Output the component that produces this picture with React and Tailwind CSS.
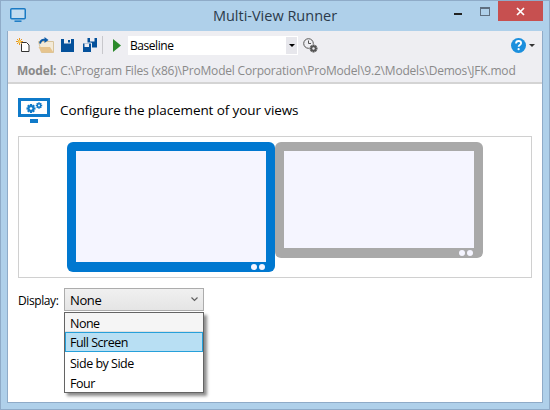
import React from 'react';

const font = { fontFamily: '"Open Sans", "Noto Sans", sans-serif' };

const Gear = ({ x, y, r, fill = '#fff', hole = '#fff' }) => (
  <g>
    {[0, 45, 90, 135].map((a) => (
      <rect key={a} x={x - r * 0.25} y={y - r} width={r * 0.5} height={r * 2} fill={fill} transform={`rotate(${a} ${x} ${y})`} />
    ))}
    <circle cx={x} cy={y} r={r * 0.72} fill={fill} />
    <circle cx={x} cy={y} r={r * 0.3} fill={hole} />
  </g>
);

const NewIcon = () => (
  <svg width="14" height="14" viewBox="0 0 14 14" className="shrink-0">
    <path d="M5.500 4.500H10.500L13 7v6.500H5.500z" fill="#fff" stroke="#333" strokeWidth="1" />
    <g stroke="#e8961e" strokeWidth="1">
      <path d="M3.500 0v7M0 3.500h7M1 1l5 5M6 1L1 6" />
    </g>
    <circle cx="3.500" cy="3.500" r="1.500" fill="#f6d365" />
  </svg>
);

const OpenIcon = () => (
  <svg width="16" height="16" viewBox="0 0 16 16" className="shrink-0">
    <path d="M0.500 4.500h15v11H3.500z" fill="#f3ead8" stroke="#d8c49c" strokeWidth="1" />
    <path d="M0.500 10h11.500l3.500 5.500H3.500z" fill="#e6c48e" />
    <path d="M2 6.500C2.500 3.500 4.500 2.500 7 3" fill="none" stroke="#0f5ca8" strokeWidth="2" />
    <path d="M6.500 0l4 3-4 3z" fill="#0f5ca8" />
  </svg>
);

const SaveIcon = () => (
  <svg width="13" height="13" viewBox="0 0 13 13" className="shrink-0">
    <path d="M0 0h13v13H0z" fill="#04519b" />
    <path d="M3 0h7v4.500H3z" fill="#eeeef2" />
    <path d="M7 1h2v2.500H7z" fill="#04519b" />
  </svg>
);

const SaveAllIcon = () => (
  <svg width="15" height="15" viewBox="0 0 15 15" className="shrink-0">
    <path d="M5.500 0h9.500v9.500H5.500z" fill="#04519b" />
    <path d="M8 0h4.500v3.500H8z" fill="#eeeef2" />
    <path d="M0.500 5h9v9.500h-9z" fill="#04519b" stroke="#eeeef2" strokeWidth="1" />
    <path d="M2.500 5.500h4.500v3.500H2.500z" fill="#eeeef2" />
  </svg>
);

const ScheduleIcon = () => (
  <svg width="15" height="15" viewBox="0 0 15 15" className="shrink-0">
    <circle cx="5.500" cy="5.500" r="4.800" fill="none" stroke="#555" strokeWidth="1" />
    <path d="M5.500 2.500v3h2.500" fill="none" stroke="#555" strokeWidth="1" />
    <circle cx="10.500" cy="10.500" r="4.500" fill="#eeeef2" />
    <Gear x={10.500} y={10.500} r={4} fill="#555" hole="#eeeef2" />
  </svg>
);

const Monitor = ({ active }) => (
  <div className={active
    ? 'w-[208px] h-[130px] bg-[#0078d0] rounded-[6px] pt-[9px] px-[9px] flex flex-col shrink-0'
    : 'w-[208px] h-[116px] bg-[#a9a9a9] rounded-[6px] pt-[9px] px-[9px] flex flex-col shrink-0'}
  >
    <div className={active ? 'h-[111px] bg-[#f5f5ff]' : 'h-[97px] bg-[#f5f5ff]'} />
    <div className="flex justify-end gap-[2px] pr-[1px] pt-[2px]">
      <span className="w-[6px] h-[6px] rounded-full bg-[#f5f5ff]" />
      <span className="w-[6px] h-[6px] rounded-full bg-[#f5f5ff]" />
    </div>
  </div>
);

const App = () => {
  return (
    <div style={font} className="w-[550px] h-[410px] bg-[#afd0ea] border border-[#8fabc8] flex flex-col overflow-hidden text-[12px] text-black">
      {/* title bar */}
      <div className="h-[30px] flex items-start shrink-0 pl-[9px] pr-[6px]">
        <svg width="16" height="14" viewBox="0 0 16 14" className="mt-[7px] shrink-0">
          <rect x="0.750" y="0.750" width="14.500" height="10" rx="1" fill="#c3dcf0" stroke="#1a7ac4" strokeWidth="1.500" />
          <path d="M4.500 13.200h7" stroke="#1a7ac4" strokeWidth="1.500" />
        </svg>
        <div className="flex-1 text-center text-[14.500px] leading-[20px] mt-[5px] text-[#2b3a4a] pl-[70px]">Multi-View Runner</div>
        <span className="w-[8px] h-[2px] bg-[#222] mt-[12px]" />
        <div className="w-[10px] h-[9px] border border-[#5f6f80] border-t-2 mt-[6px] ml-[18px]" />
        <div className="w-[45px] h-[20px] bg-[#c75050] text-white ml-[8px] flex items-center justify-center">
          <svg width="9" height="9" viewBox="0 0 9 9"><path d="M1 1l7 7M8 1l-7 7" stroke="#fff" strokeWidth="1.700" /></svg>
        </div>
      </div>

      {/* client area */}
      <div className="flex-1 mx-[6px] mb-[6px] border border-[#8fabc8] border-t-0 flex flex-col bg-white min-h-0">
        <div className="bg-[#eeeef2] border-b-2 border-[#d4d4d4] h-[53px] shrink-0 pl-[8px] pr-[7px]">
          <div className="flex items-center h-[28px]">
            <NewIcon />
            <div className="w-[8px]" />
            <OpenIcon />
            <div className="w-[7px]" />
            <SaveIcon />
            <div className="w-[8px]" />
            <SaveAllIcon />
            <div className="w-[1px] h-[18px] bg-[#c8c8cc] ml-[5px]" />
            <svg width="8" height="13" viewBox="0 0 8 13" className="ml-[10px] shrink-0"><path d="M0 0l8 6.500L0 13z" fill="#2b8a2b" /></svg>
            <div className="w-[158px] h-[19px] bg-white ml-[7px] flex items-center pl-[2px] pt-[1px] shrink-0 tracking-[-0.45px]">Baseline</div>
            <div className="w-[12px] h-[19px] bg-[#e7e7ec] border-y border-r border-white flex items-center justify-center shrink-0 mr-[5px]">
              <span className="border-x-[3.500px] border-x-transparent border-t-[3.500px] border-t-black" />
            </div>
            <ScheduleIcon />
            <div className="flex-1" />
            <svg width="15" height="15" viewBox="0 0 15 15" className="shrink-0">
              <circle cx="7.500" cy="7.500" r="7.500" fill="#1b8fdd" />
              <path d="M5 5.500C5 3.800 6.200 3 7.600 3c1.500 0 2.500.9 2.500 2.200 0 1.800-2.500 1.800-2.500 3.600" fill="none" stroke="#fff" strokeWidth="1.800" />
              <circle cx="7.600" cy="11.200" r="1.100" fill="#fff" />
            </svg>
            <span className="border-x-[3px] border-x-transparent border-t-[3.500px] border-t-[#333] ml-[3px]" />
          </div>
          <div className="flex items-center h-[23px] text-[#8a8a8a] whitespace-nowrap tracking-[-0.2px]">
            <span className="font-bold mr-[4px] ml-[1px]">Model:</span>
            <span>C:\Program Files (x86)\ProModel Corporation\ProModel\9.2\Models\Demos\JFK.mod</span>
          </div>
        </div>

        <div className="flex-1 px-[10px] relative flex flex-col">
          <div className="flex items-center h-[52px] shrink-0">
            <svg width="32" height="25" viewBox="0 0 32 25" className="shrink-0">
              <rect x="1.500" y="1.500" width="29" height="16" fill="#fff" stroke="#0f7ac9" strokeWidth="3" />
              <rect x="0" y="17" width="32" height="2" fill="#0f7ac9" />
              <rect x="12" y="21" width="8" height="4" fill="#0f7ac9" />
              <Gear x={13} y={10.500} r={4.500} fill="#0f7ac9" />
              <Gear x={21} y={7.500} r={3.200} fill="#0f7ac9" />
            </svg>
            <span className="ml-[10px] text-[13.500px] tracking-[-0.1px] whitespace-nowrap">Configure the placement of your views</span>
          </div>

          <div className="h-[142px] border border-[#d0d0d0] shrink-0 flex justify-center items-start pt-[5px]">
            <Monitor active />
            <Monitor />
          </div>

          <div className="flex items-center mt-[10px] shrink-0">
            <span className="w-[46px] shrink-0 tracking-[-0.4px] pt-[3px]">Display:</span>
            <div className="relative w-[140px] h-[23px] border border-[#acacac] bg-gradient-to-b from-[#f0f0f0] to-[#e5e5e5] flex items-center pl-[5px] pt-[3px] text-[13px] tracking-[-0.4px]">
              None
              <svg width="7" height="5" viewBox="0 0 7 5" className="absolute right-[5px] top-[8px]"><path d="M0.500 0.500L3.500 3.500l3-3" fill="none" stroke="#606060" strokeWidth="1.200" /></svg>
              <div className="absolute left-[-1px] top-[22px] w-[140px] h-[81px] mt-[1px] border border-[#646464] bg-white shadow-[3px_3px_3px_rgba(0,0,0,0.45)] z-10 text-[12.500px] tracking-[-0.5px]">
                <div className="h-[19px] bg-[#f5f5f5] border-b border-[#e0e0e0] pl-[5px] pt-[5px] flex items-center">None</div>
                <div className="h-[20px] bg-[#b8dff3] border border-[#26a0da] pl-[4px] pt-[3px] flex items-center">Full Screen</div>
                <div className="h-[20px] pl-[5px] pt-[4px] flex items-center">Side by Side</div>
                <div className="h-[20px] pl-[5px] pt-[4px] flex items-center">Four</div>
              </div>
            </div>
          </div>
        </div>
      </div>
    </div>
  );
};

export default App;
